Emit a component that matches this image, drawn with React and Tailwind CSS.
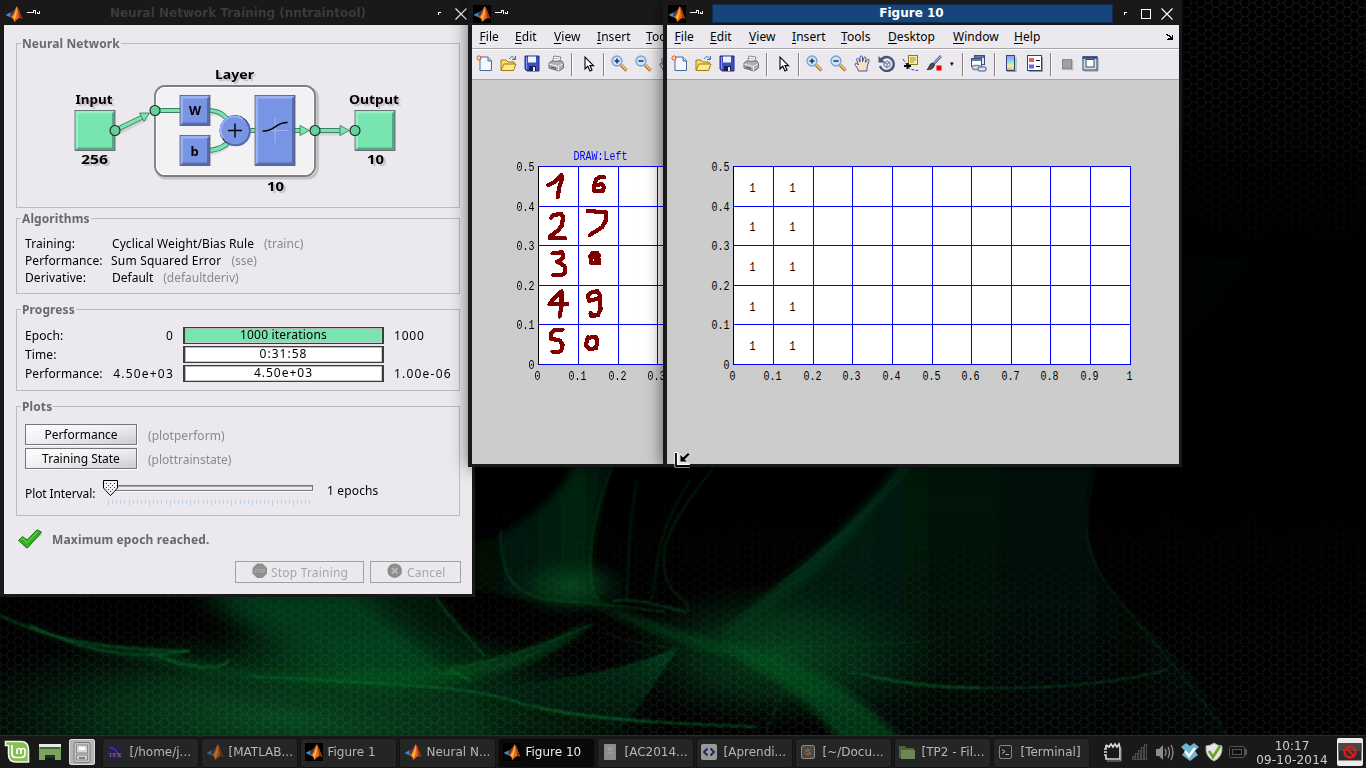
import React from "react";

const UI = "font-['Noto_Sans',sans-serif] text-[12px]";

/* ---------- wallpaper ---------- */
function Wallpaper() {
  return (
    <svg className="absolute inset-0" width="1366" height="768" viewBox="0 0 1366 768">
      <defs>
        <pattern id="hex" x="4" y="3" width="14.6" height="9" patternUnits="userSpaceOnUse">
          <path d="M0 4.5H2.4L4.9 0H9.7L12.2 4.5H14.6M2.4 4.5L4.9 9H9.7L12.2 4.5" fill="none" stroke="#fff" strokeOpacity=".085" strokeWidth="1.1" />
        </pattern>
        <linearGradient id="hexFade" x1="0" y1="0" x2="0" y2="1">
          <stop offset="0" stopColor="#fff" />
          <stop offset=".12" stopColor="#ddd" />
          <stop offset=".36" stopColor="#000" />
          <stop offset=".6" stopColor="#000" />
          <stop offset=".72" stopColor="#444" />
          <stop offset=".86" stopColor="#bbb" />
          <stop offset="1" stopColor="#eee" />
        </linearGradient>
        <mask id="hexMask"><rect width="1366" height="768" fill="url(#hexFade)" /></mask>
        <linearGradient id="plume" x1="0" y1="0" x2="1" y2="0">
          <stop offset="0" stopColor="#04361a" />
          <stop offset=".35" stopColor="#032212" />
          <stop offset=".8" stopColor="#020f06" />
          <stop offset="1" stopColor="#021c0b" />
        </linearGradient>
        <linearGradient id="plumeFade" x1="0" y1="0" x2="0" y2="1">
          <stop offset="0" stopColor="#fff" /><stop offset=".6" stopColor="#bbb" /><stop offset="1" stopColor="#333" />
        </linearGradient>
        <mask id="plumeMask"><rect x="600" y="440" width="700" height="300" fill="url(#plumeFade)" /></mask>
        <linearGradient id="plumeA" x1="0" y1="0" x2="1" y2="0">
          <stop offset="0" stopColor="#010a04" />
          <stop offset=".75" stopColor="#03240f" />
          <stop offset="1" stopColor="#021208" />
        </linearGradient>
        <radialGradient id="glow"><stop offset="0" stopColor="#054a1e" /><stop offset=".5" stopColor="#043616" stopOpacity=".8" /><stop offset="1" stopColor="#021" stopOpacity="0" /></radialGradient>
        <linearGradient id="blade" x1=".8" y1="0" x2=".3" y2="1">
          <stop offset="0" stopColor="#05421c" /><stop offset=".5" stopColor="#032a12" stopOpacity=".8" /><stop offset="1" stopColor="#021508" stopOpacity=".1" />
        </linearGradient>
        <filter id="b1"><feGaussianBlur stdDeviation=".8" /></filter>
        <filter id="b3" x="-20%" y="-20%" width="140%" height="140%"><feGaussianBlur stdDeviation="4" /></filter>
        <filter id="b8" x="-30%" y="-30%" width="160%" height="160%"><feGaussianBlur stdDeviation="14" /></filter>
      </defs>
      <rect width="1366" height="768" fill="#000" />
      <path d="M1180 345L1255 262L1183 255Z" fill="#010d06" filter="url(#b3)" opacity=".35" />
      <path d="M575 460C560 505 510 530 475 545L475 590C520 600 560 600 597 602C585 560 597 520 612 460Z" fill="url(#plumeA)" filter="url(#b3)" />
      <g mask="url(#plumeMask)">
        <path d="M910 455C870 510 800 570 719 635C760 690 850 700 900 745H1232C1200 660 1150 640 1106 583C1078 530 1085 500 1096 455Z" fill="url(#plume)" filter="url(#b1)" opacity=".8" />
      </g>
      <path d="M905 450C865 520 790 570 724 632C780 610 830 560 850 540C870 510 885 490 925 450Z" fill="#05381a" filter="url(#b3)" opacity=".55" />
      <ellipse cx="300" cy="715" rx="380" ry="90" fill="url(#glow)" />
      <ellipse cx="370" cy="672" rx="180" ry="55" fill="url(#glow)" opacity=".85" />
      <ellipse cx="780" cy="655" rx="170" ry="75" fill="url(#glow)" opacity=".8" />
      <ellipse cx="570" cy="586" rx="62" ry="32" fill="url(#glow)" opacity=".8" />
      <path d="M200 580H370C410 620 440 650 450 672C360 680 250 660 200 580Z" fill="#05431b" filter="url(#b8)" opacity=".85" />
      <path d="M350 585H430C455 620 480 645 490 665C460 680 420 655 350 585Z" fill="#03240f" filter="url(#b3)" opacity=".6" />
      <path d="M436 598C450 618 470 640 484 655" stroke="#067030" fill="none" strokeWidth="2" filter="url(#b1)" opacity=".5" />
      <path d="M480 688C560 682 630 668 679 647C650 690 640 710 610 740H500C480 720 480 700 480 688Z" fill="url(#blade)" filter="url(#b1)" opacity=".75" />
      <path d="M584 600C640 616 690 640 740 646C790 658 850 680 905 745H840C820 710 780 680 735 656C690 645 640 630 584 600Z" fill="#05501f" filter="url(#b3)" opacity=".65" />
      <path d="M0 617C50 640 120 652 174 657C210 669 240 673 261 675C340 678 410 670 450 668C500 662 540 648 592 622C560 655 510 672 450 680C350 684 240 684 174 664C120 655 60 645 0 617Z" fill="#05501f" filter="url(#b3)" opacity=".7" />
      <g fill="none" stroke="#07702e" filter="url(#b1)">
        <path d="M0 615C60 646 130 650 188 651" strokeWidth="2.5" opacity=".55" />
        <path d="M30 625C100 660 150 657 190 651M150 652C180 668 222 672 229 660" strokeWidth="2" opacity=".6" />
        <path d="M250 676C400 685 470 685 523 704C590 720 680 724 758 727" strokeWidth="1.6" opacity=".75" />
        <path d="M540 708C570 715 600 718 650 722" strokeWidth="2.5" opacity=".4" />
        <path d="M450 669C500 660 540 648 592 624" strokeWidth="2" opacity=".4" />
        <path d="M446 674C460 668 458 678 472 680" strokeWidth="3" opacity=".45" />
        <path d="M501 530C500 585 520 596 552 600C600 604 640 608 665 612" strokeWidth="1.5" opacity=".5" />
        <path d="M612 467C592 520 582 570 598 602" strokeWidth="2" opacity=".3" />
        <path d="M714 467C680 510 660 540 664 567C668 600 692 598 688 612" strokeWidth="1.6" opacity=".35" />
        <path d="M637 480C627 530 630 570 626 601M690 480C652 540 658 570 652 600" strokeWidth="2" opacity=".25" />
        <path d="M612 601C640 598 660 606 686 612" strokeWidth="2.500" opacity=".4" />
        <path d="M600 632C650 650 700 650 740 652C830 640 900 650 955 636" strokeWidth="1.200" opacity=".25" />
        <path d="M850 672C900 682 930 688 1000 688C1070 688 1120 682 1167 670" strokeWidth="1.600" opacity=".5" />
        <path d="M872 677C900 682 930 688 980 688" strokeWidth="3" opacity=".35" />
        <path d="M1096 467C1078 530 1090 560 1106 583C1150 640 1180 670 1228 735" strokeWidth="1.500" opacity=".25" />
        <path d="M910 467C860 530 780 580 719 633" strokeWidth="1.500" opacity=".2" />
        <path d="M787 683C780 700 770 720 766 733" strokeWidth="1.500" opacity=".3" />
      </g>
      <rect width="1366" height="768" fill="url(#hex)" mask="url(#hexMask)" />
    </svg>
  );
}

/* ---------- small shared drawings ---------- */
function MatlabIcon({ black = false, dim = false }) {
  return (
    <svg width="18" height="18" viewBox="0 0 18 18" className={dim ? "opacity-60 shrink-0" : "shrink-0"}>
      {black && <rect width="18" height="18" fill="#000" />}
      <path d="M.5 10L5 7.6L8 9.5L5.6 12.2L3.6 11.6Z" fill="#3a8fc0" />
      <path d="M5 7.6C7.500 7 9.500 4.500 11.300 1.500L9.600 8.500L7 12.200L5.600 12.200Z" fill="#4d3a50" />
      <path d="M11.300 1.500C13.200 1 15 8.500 17.500 14C15 12.300 13.400 12.800 9.300 17.300C8.600 14 7.600 13 5.600 12.200C8.500 10.500 9.600 6 11.300 1.500Z" fill="#e2661a" />
      <path d="M11.500 2C12.200 6 12 11 9.500 15.500C8.900 13.800 8.400 13 7.600 12.300C9.800 10 10.600 6 11.500 2Z" fill="#f9b43c" />
      <path d="M12 2C14 4 15 9.500 17.500 14C16 13 15 12.600 13.900 13C14.200 9 13 5 12 2Z" fill="#a32a14" />
    </svg>
  );
}

function Pin() {
  return (
    <svg width="14" height="8" viewBox="0 0 14 8" shapeRendering="crispEdges" className="shrink-0">
      <path d="M0 3.500H6M6.500 1V4M6 1.500H9M8.500 2V5M10.500 3V5M12.500 2V5M11 4.500H12" stroke="#f2f2f2" fill="none" />
    </svg>
  );
}

function TitleBar({ title, active, black, max, plain, left, tab, tail }) {
  return (
    <div className={`flex h-[25px] items-center pt-[2px] ${left}`}>
      <MatlabIcon black={black} />
      <div className="mb-[1px] ml-[4px] flex"><Pin /></div>
      <div className={`mb-[1px] flex h-[19px] items-center justify-center whitespace-nowrap font-['DejaVu_Sans',sans-serif] text-[12px] font-bold ${tab} ${active ? "border border-[#0f2c4c] bg-[#15457a] text-white" : "text-[#3b3b3b]"}`}>
        {title}
      </div>
      {!plain && <svg width="6" height="8" viewBox="0 0 6 8" className={tail} shapeRendering="crispEdges"><path d="M.5 5V2.500H3" stroke="#fff" fill="none" /></svg>}
      {max && (
        <svg width="11" height="12" viewBox="0 0 11 12" className="ml-[11px]" shapeRendering="crispEdges">
          <rect x=".5" y="1.500" width="9" height="9" stroke="#fff" fill="none" /><path d="M0 1H10M9.500 1V11" stroke="#fff" />
        </svg>
      )}
      {!plain && <svg width="12" height="12" viewBox="0 0 12 12" className={max ? "ml-[9px]" : "ml-[11px]"}><path d="M.5 .5L11.500 11.500M11.500 .5L.5 11.500" stroke="#fff" strokeWidth="1.100" /></svg>}
    </div>
  );
}

/* ---------- training tool ---------- */
function Group({ title, className, children }) {
  return (
    <fieldset className={`w-[444px] shrink-0 border border-[#bcbcbe] ${className}`}>
      <legend className="-ml-[4px] h-[15px] px-[1px] text-[12px] font-bold leading-[15px] tracking-[0.1px] text-[#6a6a6e]">{title}</legend>
      {children}
    </fieldset>
  );
}

function Bevel({ x, y, w, h, base, light, dark }) {
  return (
    <g>
      <rect x={x} y={y} width={w} height={h} fill={base} />
      <path d={`M${x} ${y}h${w}l-3 3h${6 - w}v${h - 6}l-3 3z`} fill={light} />
      <path d={`M${x + w} ${y + h}h${-w}l3 -3h${w - 6}v${6 - h}l3 -3z`} fill={dark} />
      <rect x={x} y={y} width={w} height={h} fill="none" stroke="#555c66" strokeWidth=".8" />
    </g>
  );
}

function Diagram() {
  const ports = [[115, 130.5], [155, 110.5], [315, 130.5], [355, 130.5]];
  const labels = [
    ["Layer", 234.5, 78.5, 39], ["Input", 94, 103.5, 37], ["Output", 374, 103.5, 50],
    ["256", 94.500, 163.5, 27], ["10", 275.500, 190.5, 17], ["10", 375.500, 163.5, 17],
  ];
  return (
    <svg width="442" height="156" viewBox="17 51 442 156" className="block">
      <rect x="156.500" y="88" width="161" height="90" rx="10" fill="none" stroke="#000" strokeOpacity=".16" strokeWidth="3" />
      <rect x="155" y="86" width="160" height="90" rx="10" fill="#f2f1f3" stroke="#7d7d7d" strokeWidth="1.800" />
      <rect x="156.500" y="87.500" width="157" height="87" rx="8.500" fill="none" stroke="#fff" strokeWidth="1" />
      <g fill="none" strokeLinecap="butt">
        <g stroke="#000" strokeOpacity=".1" strokeWidth="5"><path d="M117 133L147 118M211 153C220 151 225 148 232 142M211 113C220 113 224 116 230 122M318 133H342" /></g>
        <g stroke="#3f7f62" strokeWidth="5"><path d="M119 128.500L143 116.800M160 110.500H180M210 110.500C219 111 223 114 228 120M210 150.500C219 149 225 147 229 141M249 130.500H255M295 130.500H300M320 130.500H341" /></g>
        <g stroke="#78e4b0" strokeWidth="3.200"><path d="M119 128.500L144 116.300M160 110.500H180M210 110.500C219 111 223 114 228 120M210 150.500C219 149 225 147 229 141M249 130.500H255M295 130.500H301M320 130.500H342" /></g>
      </g>
      <g fill="#78e4b0" stroke="#3f7f62" strokeWidth=".9">
        <path d="M139.500 113L149.500 113L144 121.500Z" /><path d="M300 125.500L309.500 130.500L300 135.500Z" /><path d="M340 125.500L349.500 130.500L340 135.500Z" />
      </g>
      <Bevel x={75} y={110.5} w={40} h={40} base="#78e4b0" light="#9aeec6" dark="#58a683" />
      <Bevel x={355} y={110.5} w={40} h={40} base="#78e4b0" light="#9aeec6" dark="#58a683" />
      <Bevel x={180} y={95.5} w={30} h={30} base="#7894e4" light="#9ab0f0" dark="#566cac" />
      <Bevel x={180} y={135.5} w={30} h={30} base="#7894e4" light="#9ab0f0" dark="#566cac" />
      <Bevel x={255} y={95.5} w={40} h={70} base="#7894e4" light="#9ab0f0" dark="#566cac" />
      <circle cx="235" cy="130.500" r="15" fill="#7894e4" stroke="#111" strokeWidth="1" />
      <path d="M223 138A14 14 0 0 1 243 119" stroke="#9ab0f0" fill="none" strokeWidth="2" />
      <path d="M247 123A14 14 0 0 1 228 143" stroke="#566cac" fill="none" strokeWidth="2" />
      <path d="M228 130.500H242M235 123.500V137.500" stroke="#000" strokeWidth="1.400" />
      <path d="M262 130.500H288M275 118V143" stroke="#9fb2ee" strokeWidth="1.200" />
      <path d="M262.500 131C275 132 274 122.500 287.500 122.500" stroke="#000" strokeWidth="1.400" fill="none" />
      {ports.map(([x, y]) => <circle key={x} cx={x} cy={y} r="5" fill="#66cf9c" stroke="#16241e" strokeWidth="1.100" />)}
      <g fontFamily="'Noto Sans',sans-serif" fontWeight="700" textAnchor="middle">
        <g fill="#000" fontSize="13">
          {labels.map(([t, x, y, w]) => (
            <text key={t + x + y} x={x} y={y} textLength={w} lengthAdjust="spacingAndGlyphs" className="[text-shadow:2px_2px_1px_rgba(0,0,0,0.18)]">{t}</text>
          ))}
          <text x="195" y="115" fontSize="12.500">W</text>
          <text x="194.500" y="156" fontSize="13">b</text>
        </g>
      </g>
    </svg>
  );
}

function Algo({ name, value, fn, track }) {
  return (
    <div className="flex h-[17px] items-center whitespace-nowrap">
      <span className="w-[87px] tracking-[0.1px]">{name}</span>
      <span className={track}>{value}</span>
      <span className="ml-[10px] text-[#8a8a8e]">{fn}</span>
    </div>
  );
}

function ProgressRow({ name, from, text, to, full }) {
  return (
    <div className="flex h-[19px] items-center whitespace-nowrap">
      <span className="w-[82px] tracking-[0.1px]">{name}</span>
      <span className="flex w-[67px] justify-end tracking-[1.2px]">{from}</span>
      <span className={`mb-[1px] ml-[9px] flex h-[17px] w-[201px] items-center justify-center border-x-2 border-y border-[#3c3c3e] pb-[1px] shadow-[inset_1px_1px_0_#b8b8b8,inset_-1px_-1px_0_#c8c8c8] ${full ? "bg-[#78e4b0] tracking-[0.2px]" : "bg-white tracking-[1px]"}`}>{text}</span>
      <span className={full ? "ml-[10px] tracking-[0.8px]" : "ml-[10px] tracking-[1.2px]"}>{to}</span>
    </div>
  );
}

const BTN = "flex h-[21px] w-[112px] items-center justify-center border border-[#77777b] bg-linear-to-br from-[#ffffff] via-[#efedf1] to-[#cfcdd2] shadow-[1px_1px_0_#fff]";

function Slider() {
  const ticks = Array.from({ length: 51 }, (_, i) => i);
  return (
    <svg width="212" height="28" viewBox="102 479 212 28" className="block" shapeRendering="crispEdges">
      <rect x="112.500" y="485.500" width="200" height="5" fill="#ececec" stroke="#77777b" />
      <path d="M113 486.500H312" stroke="#a8a8aa" />
      <path d="M113 491.500H314" stroke="#fff" />
      {ticks.map((i) => <path key={i} d={`M${Math.round(108 + i * 4.11) + 0.5} 500V${i % 5 === 0 ? 506 : 504}`} stroke="#bccfe4" />)}
      <path d="M103.500 480.500H117.500V488L110.500 495.500L103.500 488Z" fill="#f4f4f4" stroke="#000" shapeRendering="auto" />
      <path d="M106 483h1m3 0h1m3 0h1M108 485h1m3 0h1M106 487h1m3 0h1m3 0h1M108 489h1m3 0h1M110 491h1" stroke="#333" />
    </svg>
  );
}

function TrainingWindow() {
  return (
    <div className={`absolute left-0 top-0 flex h-[597px] w-[475px] flex-col bg-[#191919] ${UI}`}>
      <TitleBar title="Neural Network Training (nntraintool)" left="pl-[5px]" tab="w-[376px] pl-[18px]" tail="ml-[21px]" />
      <div className="ml-[4px] flex h-[569px] w-[468px] flex-col bg-[#ebe9ed] pl-[12px] pt-[11px]">
        <Group title="Neural Network" className="h-[172px] [&>legend]:ml-[4px]"><Diagram /></Group>
        <Group title="Algorithms" className="mt-[3px] h-[83px] pl-[8px] pt-[9px]">
          <Algo name="Training:" value="Cyclical Weight/Bias Rule" fn="(trainc)" track="tracking-[0.08px]" />
          <Algo name="Performance:" value="Sum Squared Error" fn="(sse)" track="-ml-[1px] tracking-[0.2px]" />
          <Algo name="Derivative:" value="Default" fn="(defaultderiv)" track="" />
        </Group>
        <Group title="Progress" className="mt-[8px] h-[89px] pl-[8px] pt-[9px]">
          <ProgressRow name="Epoch:" from="0" text="1000 iterations" to="1000" full />
          <ProgressRow name="Time:" text="0:31:58" />
          <ProgressRow name="Performance:" from="4.50e+03" text="4.50e+03" to="1.00e-06" />
        </Group>
        <Group title="Plots" className="mt-[8px] h-[117px] pl-[8px] pt-[10px]">
          <div className="flex h-[24px] items-start"><span className={BTN}>Performance</span><span className="ml-[11px] mt-[3px] text-[#8a8a8e] tracking-[0.05px]">(plotperform)</span></div>
          <div className="flex h-[24px] items-start"><span className={BTN}>Training State</span><span className="ml-[11px] mt-[3px] text-[#8a8a8e]">(plottrainstate)</span></div>
          <div className="mt-[7px] flex items-start whitespace-nowrap">
            <span className="mt-[6px] w-[77px] tracking-[-0.1px]">Plot Interval:</span>
            <Slider />
            <span className="ml-[13px] mt-[3px] tracking-[0.15px]">1 epochs</span>
          </div>
        </Group>
        <div className="mt-[12px] flex h-[24px] items-center gap-[10px]">
          <svg width="26" height="22" viewBox="0 0 26 22">
            <path d="M4 13L10 20L26 5L23 3L11 14L7 10Z" fill="#000" opacity=".25" />
            <path d="M2.500 11.500L6.500 7.500L11 11L21 .8L25.500 3L11.500 19Z" fill="#2fb41c" stroke="#177a10" strokeWidth="1" />
            <path d="M5 11L6.800 9.500L11 13.500L22 2.500" stroke="#7cdc68" fill="none" />
          </svg>
          <span className="font-bold tracking-[0.15px] text-[#68686c]">Maximum epoch reached.</span>
        </div>
        <div className="mt-[9px] flex gap-[6px] pl-[219px] text-[#a6a6aa]">
          <span className="flex h-[22px] w-[129px] items-center border border-[#a0a0a4] pl-[16px] pt-[1px]">
            <svg width="16" height="16" viewBox="0 0 16 16" className="mb-[3px] shrink-0"><path d="M5 .5H10.500L15 5V10.500L10.500 15H5L.5 10.500V5Z" fill="#8f8f8f" /><text x="7.700" y="9.500" fontSize="4.500" fontWeight="700" textAnchor="middle" fill="#b0b0b0">STOP</text></svg>
            <span className="ml-[3px] whitespace-nowrap tracking-[0.2px]">Stop Training</span>
          </span>
          <span className="flex h-[22px] w-[91px] items-center border border-[#a0a0a4] pl-[16px] pt-[1px]">
            <svg width="16" height="16" viewBox="0 0 16 16" className="mb-[3px] shrink-0"><circle cx="7.700" cy="7.700" r="7.300" fill="#8c8c8c" /><path d="M5 5L10.500 10.500M10.500 5L5 10.500" stroke="#b8b8b8" strokeWidth="2" /></svg>
            <span className="ml-[4px] tracking-[0.2px]">Cancel</span>
          </span>
        </div>
      </div>
    </div>
  );
}

/* ---------- figure windows ---------- */
const TOOLS = {
  new: <g><path d="M4 2H12L15.500 5.500V15.500H4Z" fill="#f4f8ff" stroke="#4a6a9c" /><path d="M12 2V6H15.500" fill="#cfe0f4" stroke="#4a6a9c" /><path d="M3 0V6M0 3H6M1 1L5 5M5 1L1 5" stroke="#e0602c" strokeWidth="1" /><circle cx="3" cy="3" r="1.200" fill="#ffd890" /></g>,
  open: <g><path d="M1 15V5H6L8 7H14V9" fill="#f6dc70" stroke="#a07c10" /><path d="M1 15.500L4 9H16L13.500 15.500Z" fill="#fbe98c" stroke="#a07c10" /><path d="M9 4C11 1 13 1 15 4M15.500 1V4.500H12" stroke="#446aa0" fill="none" /></g>,
  save: <g><path d="M1 1H15V16H3L1 14Z" fill="#3c50c4" stroke="#222c84" /><rect x="4" y="1.500" width="8" height="6" fill="#eef2ff" /><rect x="5" y="11" width="7" height="5" fill="#1a1f50" /><rect x="9" y="12" width="2" height="4" fill="#e8e8e8" /><path d="M2.500 2V14" stroke="#8a9cf0" /></g>,
  print: <g><path d="M6 1L13 2L11 8H4Z" fill="#fff" stroke="#888" /><path d="M1 8L4 6H14L15.500 9V13L11 16L1 13Z" fill="#b0b0b0" stroke="#6a6a6a" /><path d="M1 9L10 11.500L15 9M10.500 12V16" stroke="#eee" fill="none" /><path d="M3 12L8 13.500" stroke="#444" /><path d="M6 3.500H11M5.500 5.500H10" stroke="#bbb" /></g>,
  pointer: <path d="M5 2V14L7.800 11.300L10 16L12 15L10 10.600H13.500Z" fill="#fff" stroke="#000" strokeWidth="1.100" />,
  zoomin: <g><path d="M10 10L15.500 15.500" stroke="#b07830" strokeWidth="3.200" /><path d="M10 9.500L15.500 15" stroke="#f4cc7c" strokeWidth="1.400" /><circle cx="6" cy="6" r="5" fill="#c8e6fa" stroke="#7ca0cc" strokeWidth="1.300" /><path d="M3.500 6H8.500M6 3.500V8.500" stroke="#1c3060" strokeWidth="1.500" /></g>,
  zoomout: <g><path d="M10 10L15.500 15.500" stroke="#b07830" strokeWidth="3.200" /><path d="M10 9.500L15.500 15" stroke="#f4cc7c" strokeWidth="1.400" /><circle cx="6" cy="6" r="5" fill="#c8e6fa" stroke="#7ca0cc" strokeWidth="1.300" /><path d="M3.500 6H8.500" stroke="#1c3060" strokeWidth="1.500" /></g>,
  hand: <path d="M4.500 16C4 13 1 11 1 9C1.500 7.500 3.500 8.500 4.500 10L2.500 4.500C2.500 3 4.500 3 5 4.500L6 7V2C6.500 .5 8 .5 8.500 2V7L10 2.500C10.500 1.500 12 2 12 3.200L11.500 7.500L13.500 4.500C14.500 4 15.500 5 15 6L13 12V16Z" fill="#fde0c4" stroke="#3a5a9c" strokeWidth="1" />,
  rotate: <g><path d="M3 5A7 7 0 1 1 2 11" fill="none" stroke="#44587c" strokeWidth="2.400" /><path d="M.5 1V7.500H7Z" fill="#44587c" /><path d="M6 7.500L9 6L12 7.500V11L9 12.500L6 11ZM6 7.500L9 9L12 7.500M9 9V12.500" fill="#e4ecf8" stroke="#44587c" strokeWidth=".8" /></g>,
  cursor: <g><rect x="6.500" y=".5" width="9" height="9" fill="#f8f0a0" stroke="#8a7c20" /><path d="M8 3H14M8 5H14M8 7H12" stroke="#a09438" /><path d="M1 4L5 10C8 15 11 15 16 15.500" stroke="#2030e0" fill="none" strokeDasharray="3 1.500" /><path d="M5.500 8V14M2 11H9" stroke="#000" strokeWidth="2" /></g>,
  brush: <g><path d="M7.500 9L15 1" stroke="#5068a8" strokeWidth="2.600" /><path d="M8 8L15.500 .8" stroke="#b8c8ec" strokeWidth="1" /><path d="M8.500 9.500C8 14 4 15 1 14.500C3.500 13 3 9 6 8Z" fill="#4c4c54" stroke="#222" strokeWidth=".8" /><rect x="10.500" y="10.500" width="5" height="5" fill="#f40000" /></g>,
  link: <g><rect x="4.500" y=".5" width="10" height="9" fill="#dfe9f8" stroke="#34507c" /><path d="M4 2H15" stroke="#34507c" strokeWidth="1.500" /><rect x="1.500" y="3.500" width="10" height="8" fill="#fff" stroke="#34507c" /><path d="M1 5H12" stroke="#34507c" strokeWidth="1.500" /><rect x="2.500" y="10.500" width="8" height="4" rx="2" fill="#dde4ee" stroke="#7488a4" strokeWidth="1.500" /><rect x="8" y="12" width="8" height="4" rx="2" fill="#dde4ee" stroke="#7488a4" strokeWidth="1.500" /></g>,
  colorbar: <g><defs><linearGradient id="cb" x1="0" y1="0" x2="0" y2="1"><stop offset="0" stopColor="#9c90f0" /><stop offset=".35" stopColor="#7ed4f4" /><stop offset=".7" stopColor="#f8f090" /><stop offset="1" stopColor="#f49878" /></linearGradient></defs><path d="M14 2V16.500H5" stroke="#99a" fill="none" /><rect x="4.500" y=".5" width="8" height="15" fill="url(#cb)" stroke="#2c4470" /></g>,
  legend: <g><path d="M15.500 2V16.500H2" stroke="#99a" fill="none" /><rect x=".5" y=".5" width="14" height="15" fill="#fff" stroke="#2c4470" /><rect x="2" y="3" width="5" height="4" fill="#e06060" /><rect x="2" y="9.500" width="5" height="4" fill="#6868e0" /><path d="M9 5.500H13M9 11.500H13" stroke="#111" /></g>,
  hide: <g><path d="M4 14.500H14.500V5" stroke="#bbb" fill="none" strokeWidth="1.500" /><rect x="4.500" y="4.500" width="9" height="9" fill="#a0a0a0" stroke="#888" /></g>,
  show: <g><path d="M16 3V16H2" stroke="#8c98ac" fill="none" /><rect x="1" y="2" width="14" height="13" fill="#dcdcd4" stroke="#2c4878" /><path d="M.5 2.500H15.500" stroke="#2c4878" strokeWidth="2.500" /><rect x="4" y="4.500" width="8" height="7.500" fill="#fff" stroke="#2c4878" /></g>,
};

const BAR = [
  ["new", "w-[24px]"], ["open", "w-[24px]"], ["save", "w-[24px]"], ["print", "w-[23px]"], ["|", "w-[9px]"],
  ["pointer", "w-[24px]"], ["|", "w-[7px]"], ["zoomin", "w-[24px]"], ["zoomout", "w-[24px]"], ["hand", "w-[24px]"],
  ["rotate", "w-[24px]"], ["cursor", "w-[24px]"], ["brush", "w-[23px]"], ["v", "w-[14px]"], ["|", "w-[6px]"],
  ["link", "w-[26px]"], ["|", "w-[7px]"], ["colorbar", "w-[24px]"], ["legend", "w-[25px]"], ["|", "w-[7px]"],
  ["hide", "w-[24px]"], ["show", "w-[24px]"],
];

const MENUS = [
  ["File", "w-[35.5px]"], ["Edit", "w-[39px]"], ["View", "w-[43px]"], ["Insert", "w-[49px]"],
  ["Tools", "w-[47px]"], ["Desktop", "w-[65px]"], ["Window", "w-[61px]"], ["Help", "w-[30px]"],
];

const GX = [0, 40, 80, 119, 159, 199, 238, 278, 317, 357, 397];
const GY = [0, 40, 79, 119, 158, 198];
const XL = ["0", "0.1", "0.2", "0.3", "0.4", "0.5", "0.6", "0.7", "0.8", "0.9", "1"];
const YL = ["0.5", "0.4", "0.3", "0.2", "0.1", "0"];
const INK = [
  "M249 135L270 125L288 105L291 115L283 140L277 172",
  "M258 233L265 225L288 222L293 230L291 255L278 272L255 288L253 295L300 295",
  "M262 340L290 337L294 343L292 356L276 365L298 378L300 398L290 405L264 405",
  "M289 454L262 480L253 492L306 492M289 455V500L283 530",
  "M292 569L268 570L257 580L258 596L285 602L292 615L288 632L280 636L262 635",
  "M416 112L405 110L393 118L387 138L387 152L412 154L416 142L410 132L392 136",
  "M368 213L423 217V240L410 262L374 285",
  "M374 350L383 338H396L401 347L378 351V369H402V358H392",
  "M403 474L372 483L368 468L376 458L396 453L404 466L406 508L398 526L378 527L376 519",
  "M368 592L362 616L373 628L393 624L396 600L390 590L368 594",
];

function Plot({ title, values, ink, width, ticks = 11 }) {
  return (
    <svg width={width} height="384" viewBox={`0 0 ${width} 384`} className="block" fontFamily="'Liberation Mono',monospace" fontSize="12.500">
      <rect x="66" y="86" width="397" height="198" fill="#fff" />
      <g stroke="#0000ff" shapeRendering="crispEdges">
        {GX.slice(1).map((x) => <path key={x} d={`M${66.5 + x} 86V285`} />)}
        {GY.map((y) => <path key={y} d={`M66 ${86.5 + y}H464`} />)}
        <path d="M66.500 86V285" stroke="#000" />
      </g>
      {YL.map((t, i) => <text key={t} x="62.500" y={91 + GY[i]} textAnchor="end" textLength={t.length * 6} lengthAdjust="spacingAndGlyphs">{t}</text>)}
      {XL.slice(0, ticks).map((t, i) => <text key={t} x={65.5 + GX[i]} y="300" textAnchor="middle" textLength={t.length * 6} lengthAdjust="spacingAndGlyphs">{t}</text>)}
      {title && <text x="128.500" y="79.500" fill="#0000ff" textAnchor="middle" textLength="54" lengthAdjust="spacingAndGlyphs">{title}</text>}
      {values && [0, 1].map((c) => [112, 151, 191, 231, 270].map((y) => <text key={c + "-" + y} x={85.500 + c * 40} y={y} textAnchor="middle" textLength="6" lengthAdjust="spacingAndGlyphs">1</text>))}
      {ink && (
        <g transform="translate(-6.8 60) scale(.33333)" fill="none" stroke="#800000" strokeWidth="12.500" strokeLinejoin="round" strokeLinecap="round" shapeRendering="crispEdges">
          {INK.map((d) => <path key={d} d={d} />)}
        </g>
      )}
    </svg>
  );
}

function FigureBody({ width, menus = MENUS, tools = BAR, dock, plot }) {
  return (
    <div className={`flex flex-col overflow-hidden bg-[#cccccc] ${width}`}>
      <div className="flex h-[23px] shrink-0 items-center bg-[#ebe9ed] pl-[7.5px]">
        {menus.map(([m, w]) => (
          <span key={m} className={`shrink-0 whitespace-nowrap tracking-[0.05px] ${w}`}>
            <span className="underline underline-offset-2">{m[0]}</span>{m.slice(1)}
          </span>
        ))}
        {dock && <svg width="9" height="8" viewBox="0 0 9 8" className="ml-[121px]" shapeRendering="crispEdges"><path d="M1 1.500H3M2 2.500H5M4 3.500H6M5 4.500H7M2 6.500H8M3 5.500H8M7.500 2V7" stroke="#000" fill="none" /></svg>}
      </div>
      <div className="flex h-[32px] shrink-0 items-center border-y border-[#a5a5a5] bg-[#ebe9ed] shadow-[inset_0_1px_0_#fff]">
        {tools.map(([t, w], i) => (
          <span key={i} className={`flex h-full shrink-0 items-center justify-center ${w}`}>
            {t === "|" && <span className="h-[23px] w-[1px] bg-[#808080] shadow-[1px_0_0_#fff]" />}
            {t === "v" && <span className="text-[7px]">▾</span>}
            {TOOLS[t] && <svg width="17" height="17" viewBox="0 0 17 17" className="mb-[1px] ml-[1px]">{TOOLS[t]}</svg>}
          </span>
        ))}
      </div>
      {plot}
    </div>
  );
}

/* ---------- taskbar ---------- */
const ICO = {
  tex: <g><rect x="1" y="1" width="14" height="14" fill="#2a1c50" /><path d="M3 3L8 6L13 13" stroke="#4a3878" strokeWidth="2" /><text x="8" y="13" fontSize="7" fontFamily="Liberation Serif" textAnchor="middle" fill="#94805c">TEX</text></g>,
  doc: <g><rect x="2" y="0" width="12" height="16" fill="#8a8c8c" /><path d="M5 4H11M6 6H10M5 9H11" stroke="#a8acae" /></g>,
  code: <g><rect width="16" height="16" rx="2" fill="#9a9a9a" /><path d="M6.500 4.500L3 8L6.500 11.500M9.500 4.500L13 8L9.500 11.500" stroke="#1c2c5c" strokeWidth="2" fill="none" /></g>,
  sub: <g><rect x="1.500" y="1.500" width="13" height="13" rx="1.500" fill="#4c4a48" stroke="#8a8684" /><text x="8" y="11" fontSize="9" fontWeight="700" textAnchor="middle" fill="#a86c28" fontFamily="Liberation Sans">S</text></g>,
  folder: <g><path d="M0 2H6L7 4H15V14H0Z" fill="#4c6438" /><path d="M2 6H16V15H2Z" fill="#6c8656" /></g>,
  term: <g><rect x="1.500" y="1.500" width="12" height="13" rx="1.500" fill="#202226" stroke="#85858a" /><path d="M4 5.500L7 7.500L4 9.500M7.500 10.500H11" stroke="#b8b8b8" fill="none" /></g>,
};

const TASKS = [
  ["[/home/j...", "tex"], ["[MATLAB...", "mdim"], ["Figure 1", "mb"], ["Neural N...", "m"], ["Figure 10", "mb", true],
  ["[AC2014...", "doc"], ["[Aprendi...", "code"], ["[~/Docu...", "sub"], ["[TP2 - Fil...", "folder"], ["[Terminal]", "term"],
];

function Taskbar() {
  return (
    <div className="absolute bottom-0 left-0 flex h-[33px] w-full items-center border-t border-[#2b2b2b] bg-[#191919] font-['DejaVu_Sans',sans-serif] text-[12px]">
      <svg width="102" height="32" viewBox="0 0 102 32" className="shrink-0">
        <path d="M5.500 5.500H21Q28.500 5.500 28.500 14V26H16Q8.500 26 8.500 18V9.500H5.500Z" fill="#86be52" stroke="#f2f5ee" strokeWidth="1.600" />
        <path d="M12 9V17.500Q12 21.500 16 21.500H21Q25 21.500 25 17.500V14.500Q25 12.500 23 12.500Q21 12.500 21 14.500V18M21 14.500Q21 12.500 19 12.500Q17 12.500 17 14.500V18" fill="none" stroke="#fff" strokeWidth="1.700" />
        <path d="M39 8H61V11H39Z" fill="#e8ece8" /><path d="M39 11H61V24H55V19H45V24H39Z" fill="#7aa45e" /><path d="M40 11H60V13H40Z" fill="#3c6a30" /><path d="M45 19H55V22H45Z" fill="#1c3416" />
        <rect x="69.500" y="3.500" width="25" height="25" rx="1.500" fill="#b4b4b4" stroke="#dcdcdc" />
        <rect x="74" y="6.500" width="16" height="20" rx="2" fill="#c4c4c4" stroke="#7c7c7c" /><rect x="76.500" y="9" width="11" height="8" fill="#d8d8d8" stroke="#888" /><rect x="79" y="11" width="6" height="3" fill="#fff" /><rect x="76.500" y="19" width="11" height="5" fill="#d0d0d0" stroke="#888" /><path d="M79 22H85" stroke="#666" strokeWidth="1.500" />
      </svg>
      {TASKS.map(([t, ic, on]) => (
        <div key={t} className={`mr-[2px] mt-[1px] flex h-[30px] w-[97px] shrink-0 items-center rounded-[3px] border pb-[1px] pl-[4px] ${on ? "border-[#131313] bg-[#090909] text-[#ececec]" : "border-[#121212] bg-[#242525] text-[#b6b6b6]"}`}>
          <span className="flex w-[22.5px] shrink-0">
            {ICO[ic] ? <svg width="16" height="16" viewBox="0 0 16 16">{ICO[ic]}</svg> : <span className="flex h-[16px] w-[16px] items-center"><MatlabIcon black={ic === "mb"} dim={ic === "mdim"} /></span>}
          </span>
          <span className="whitespace-nowrap">{t}</span>
        </div>
      ))}
      <svg width="156" height="32" viewBox="1092 736 156 32" className="shrink-0">
        <path d="M1106 745L1109 747L1111 744L1113 747L1115 744L1117 747L1119 744L1120 748V759H1106V755H1104M1106 745V749H1104M1104 752H1107" fill="none" stroke="#d8d8d4" strokeWidth="1.700" />
        <path d="M1107 761H1121V748" stroke="#888" fill="none" />
        <g fill="#1c1c1c" stroke="#4a4a4a"><rect x="1132.500" y="756.500" width="2" height="3" /><rect x="1135.500" y="753.500" width="2" height="6" /><rect x="1138.500" y="750.500" width="2" height="9" /><rect x="1141.500" y="747.500" width="2" height="12" /><rect x="1144.500" y="744.500" width="2" height="15" /></g>
        <path d="M1156 749H1159L1163 745V760L1159 756H1156Z" fill="#8c8c8c" /><path d="M1165 749Q1167 752 1165 756M1168 747Q1171 752 1168 758M1171 745Q1175 752 1171 760" stroke="#8c8c8c" strokeWidth="1.400" fill="none" />
        <path d="M1186 743L1190 746L1194 743L1199 747L1195 751L1198 755L1190 761L1182 755L1185 751L1181 747Z" fill="#6fb4cc" /><path d="M1185 751L1189 756L1195 748" stroke="#fff" strokeWidth="2.400" fill="none" />
        <path d="M1214 743Q1218 746 1222 746Q1223 757 1214 761Q1205 757 1206 746Q1210 746 1214 743Z" fill="#e4e8e0" stroke="#aaa" /><path d="M1209 751L1213 757L1220 746" stroke="#6ca030" strokeWidth="2.600" fill="none" />
        <rect x="1229.500" y="746.500" width="15" height="11" rx="1" fill="#141414" stroke="#555" /><rect x="1232.500" y="749.500" width="9" height="5" fill="#111" stroke="#555" /><path d="M1246 749V755" stroke="#555" strokeWidth="2" />
      </svg>
      <div className="mt-[1px] w-[88px] shrink-0 text-center leading-[14px] text-[#d0d0d0]">
        <div>10:17</div>
        <div className="tracking-[0.2px]">09-10-2014</div>
      </div>
      <svg width="27" height="28" viewBox="0 0 27 28" className="ml-[1px] shrink-0">
        <rect x="0" y="0" width="26" height="28" rx="2" fill="#ececec" /><rect x="1.500" y="5" width="23" height="17.500" fill="#2c2c2c" /><rect x="1.500" y="5" width="23" height="8" fill="#484848" />
        <circle cx="13" cy="14" r="5.500" fill="none" stroke="#d81c1c" strokeWidth="2.400" /><path d="M9 10L17 18" stroke="#d81c1c" strokeWidth="2.400" />
      </svg>
    </div>
  );
}

export default function App() {
  return (
    <div className="relative h-[768px] w-[1366px] overflow-hidden bg-black text-black">
      <Wallpaper />
      <TrainingWindow />
      <div className={`absolute left-[468px] top-0 h-[467px] w-[200px] bg-[#191919] shadow-[0_0_16px_rgba(0,0,0,0.55)] ${UI}`}>
        <TitleBar black plain title="" left="pl-[5px]" tab="w-[100px]" tail="" />
        <div className="flex h-[439px] pl-[4px]"><FigureBody width="w-[196px]" menus={MENUS.slice(0, 5)} tools={BAR.slice(0, 10)} plot={<Plot width={196} ticks={4} title="DRAW:Left" ink />} /></div>
      </div>
      <div className={`absolute left-[663px] top-0 h-[467px] w-[519px] bg-[#191919] shadow-[0_0_16px_rgba(0,0,0,0.6)] ${UI}`}>
        <TitleBar black active max title="Figure 10" left="pl-[5px]" tab="ml-[8px] w-[401px] pr-[2px]" tail="ml-[11px]" />
        <div className="flex h-[439px] pl-[4px]"><FigureBody width="w-[512px]" dock plot={<Plot width={512} values />} /></div>
      </div>
      <svg className="absolute left-[673px] top-[450px]" width="19" height="19" viewBox="0 0 19 19">
        <path d="M3.500 2V15.500H17" stroke="#fff" strokeWidth="4" fill="none" /><path d="M3 3V16H17" stroke="#000" strokeWidth="1.800" fill="none" />
        <path d="M7 4V12H15L12 9.500L17 4.500L15 2.500L10 7Z" fill="#000" stroke="#fff" strokeWidth=".8" />
      </svg>
      <Taskbar />
    </div>
  );
}
